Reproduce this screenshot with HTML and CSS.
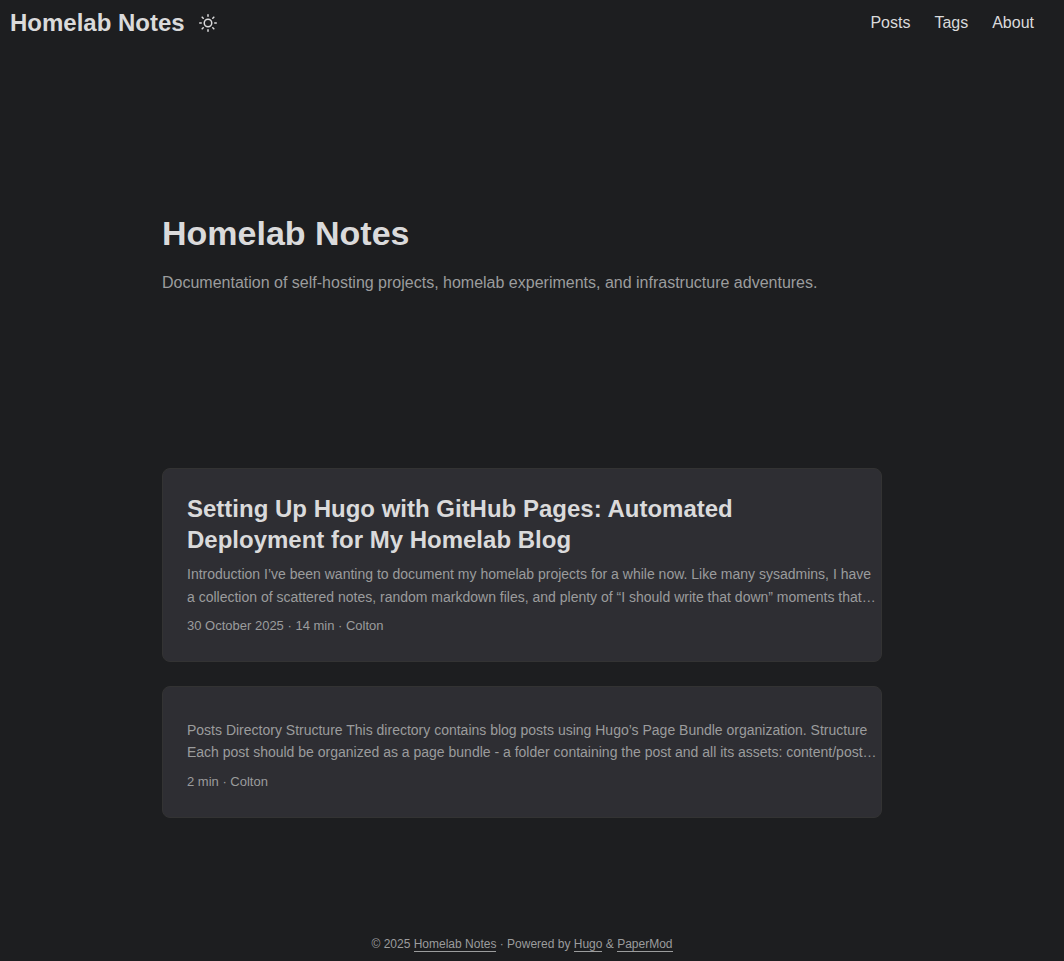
FILE: index.html
```html
<!DOCTYPE html>
<html lang="en">
<head>
<meta charset="utf-8">
<meta name="viewport" content="width=device-width, initial-scale=1">
<title>Homelab Notes</title>
<link rel="stylesheet" href="styles.css">
</head>
<body>
<header class="header">
  <div class="logo">
    <a class="logo-link" href="#">Homelab Notes</a>
    <button class="theme-toggle" type="button" aria-label="Toggle theme">
      <svg width="18" height="18" viewBox="0 0 24 24" fill="none" stroke="currentColor" stroke-width="2" stroke-linecap="round" stroke-linejoin="round">
        <circle cx="12" cy="12" r="5"/>
        <path d="M12 1v2M12 21v2M4.22 4.22l1.42 1.42M18.36 18.36l1.42 1.42M1 12h2M21 12h2M4.22 19.78l1.42-1.42M18.36 5.64l1.42-1.42"/>
      </svg>
    </button>
  </div>
  <nav>
    <ul class="menu">
      <li><a href="#">Posts</a></li>
      <li><a href="#">Tags</a></li>
      <li><a href="#">About</a></li>
    </ul>
  </nav>
</header>
<main class="main">
  <section class="intro">
    <h1 class="intro-title">Homelab Notes</h1>
    <p class="intro-text">Documentation of self-hosting projects, homelab experiments, and infrastructure adventures.</p>
  </section>
  <article class="post">
    <h2 class="post-title">Setting Up Hugo with GitHub Pages: Automated Deployment for My Homelab Blog</h2>
    <p class="post-summary">Introduction I’ve been wanting to document my homelab projects for a while now. Like many sysadmins, I have a collection of scattered notes, random markdown files, and plenty of “I should write that down” moments that…</p>
    <footer class="post-meta">30 October 2025 · 14 min · Colton</footer>
  </article>
  <article class="post">
    <p class="post-summary">Posts Directory Structure This directory contains blog posts using Hugo’s Page Bundle organization. Structure Each post should be organized as a page bundle - a folder containing the post and all its assets: content/post…</p>
    <footer class="post-meta">2 min · Colton</footer>
  </article>
</main>
<footer class="footer">© 2025 <a href="#">Homelab Notes</a> · Powered by <a href="#">Hugo</a> &amp; <a href="#">PaperMod</a></footer>
</body>
</html>
```

FILE: styles.css
```css
:root {
  --theme: #1d1e20;
  --entry: #2e2e33;
  --border: #333333;
  --primary: #dadadb;
  --secondary: #9b9c9d;
  --gap: 24px;
}

* {
  box-sizing: border-box;
  margin: 0;
  padding: 0;
}

body {
  min-height: 100vh;
  display: flex;
  flex-direction: column;
  padding-right: 20px;
  background: var(--theme);
  color: var(--primary);
  font-family: "Liberation Sans", Arial, sans-serif;
  font-size: 16px;
  line-height: 1.6;
}

a {
  color: inherit;
  text-decoration: none;
}

.header {
  display: flex;
  flex-wrap: wrap;
  justify-content: space-between;
  padding: 0 10px;
  line-height: 46px;
}

.logo {
  display: flex;
  align-items: center;
  gap: 14px;
}

.logo-link {
  font-size: 24px;
  font-weight: 700;
}

.theme-toggle {
  display: flex;
  border: 0;
  background: none;
  color: inherit;
  cursor: pointer;
}

.menu {
  display: flex;
  gap: var(--gap);
  list-style: none;
}

.main {
  flex: 1;
  width: 100%;
  max-width: 768px;
  margin: 0 auto;
  padding: 47px var(--gap) 0;
}

.intro {
  display: flex;
  flex-direction: column;
  justify-content: center;
  gap: 15px;
  min-height: 320px;
  margin-bottom: 55px;
}

.intro-title {
  font-size: 34px;
  line-height: 1.3;
}

.intro-text {
  color: var(--secondary);
}

.post {
  margin-bottom: var(--gap);
  padding: var(--gap) 4px var(--gap) var(--gap);
  border: 1px solid var(--border);
  border-radius: 8px;
  background: var(--entry);
}

.post-title {
  padding-right: 20px;
  font-size: 24px;
  line-height: 1.3;
}

.post-summary {
  margin: 8px 0;
  color: var(--secondary);
  font-size: 14px;
}

.post-meta {
  color: var(--secondary);
  font-size: 13px;
}

.footer {
  padding: 0 var(--gap) 5px;
  color: var(--secondary);
  font-size: 12px;
  line-height: 24px;
  text-align: center;
}

.footer a {
  border-bottom: 1px solid var(--secondary);
}
```
